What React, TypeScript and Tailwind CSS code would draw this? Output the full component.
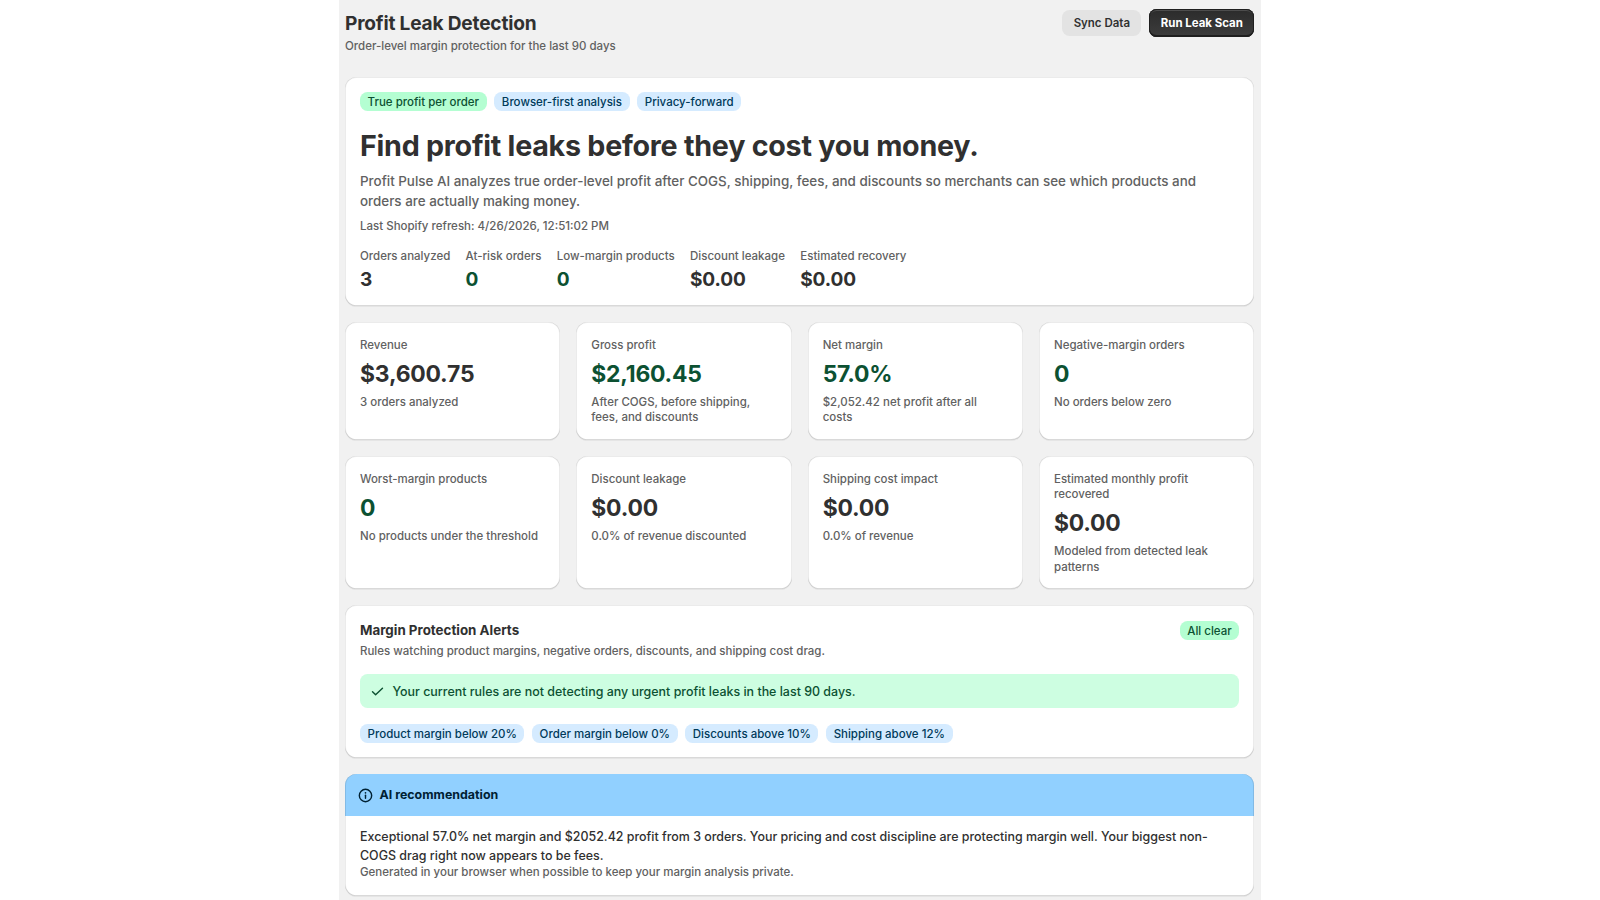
import type { ReactNode } from "react";

type Tone = "success" | "info";

const Badge = ({ tone, children }: { tone: Tone; children: ReactNode }) => (
  <span
    className={`inline-flex h-[19px] shrink-0 items-center rounded-[7.6px] px-[7.6px] pt-px text-[11.5px] leading-[16px] font-[550] whitespace-nowrap ${
      tone === "success" ? "bg-[#b4fed2] text-[#0c5132]" : "bg-[#d5ebff] text-[#003a5a]"
    }`}
  >
    {children}
  </span>
);

const Card = ({ className = "", children }: { className?: string; children: ReactNode }) => (
  <section
    className={`rounded-[11.5px] bg-white shadow-[0_1px_0_rgba(26,26,26,0.05),inset_1px_0_0_rgba(0,0,0,0.08),inset_-1px_0_0_rgba(0,0,0,0.08),inset_0_-1px_0_rgba(0,0,0,0.15),inset_0_1px_0_rgba(204,204,204,0.4)] ${className}`}
  >
    {children}
  </section>
);

const summary = [
  { label: "Orders analyzed", value: "3" },
  { label: "At-risk orders", value: "0", good: true },
  { label: "Low-margin products", value: "0", good: true },
  { label: "Discount leakage", value: "$0.00" },
  { label: "Estimated recovery", value: "$0.00" },
];

const metrics = [
  { label: "Revenue", value: "$3,600.75", note: "3 orders analyzed" },
  { label: "Gross profit", value: "$2,160.45", note: "After COGS, before shipping, fees, and discounts", good: true },
  { label: "Net margin", value: "57.0%", note: "$2,052.42 net profit after all costs", good: true },
  { label: "Negative-margin orders", value: "0", note: "No orders below zero", good: true },
  { label: "Worst-margin products", value: "0", note: "No products under the threshold", good: true },
  { label: "Discount leakage", value: "$0.00", note: "0.0% of revenue discounted" },
  { label: "Shipping cost impact", value: "$0.00", note: "0.0% of revenue" },
  { label: "Estimated monthly profit recovered", value: "$0.00", note: "Modeled from detected leak patterns" },
];

const rules = ["Product margin below 20%", "Order margin below 0%", "Discounts above 10%", "Shipping above 12%"];

const Header = () => (
  <header className="flex h-[77px] items-start justify-between pt-[9px]">
    <div>
      <h1 className="pt-px text-[19.1px] leading-[27px] font-[650] tracking-[-0.18px] text-[#303030]">Profit Leak Detection</h1>
      <p className="mt-px text-[11.5px] leading-[16px] font-[450] text-[#616161]">
        Order-level margin protection for the last 90 days
      </p>
    </div>
    <div className="flex gap-[8px]">
      <button className="mt-px h-[26px] w-[79px] rounded-[7.6px] bg-[#e3e3e3] pt-px text-[11.48px] font-[600] text-[#303030]">
        Sync Data
      </button>
      <button className="h-[28px] w-[105px] rounded-[7.6px] bg-linear-to-b from-[#2b2b2b] to-[#3d3d3d] pt-px text-[11.48px] font-[650] text-white shadow-[inset_0_0_0_1px_#1f1f1f,inset_0_2px_0_#4d4d4d,inset_0_-2px_0_#1f1f1f]">
        Run Leak Scan
      </button>
    </div>
  </header>
);

const Hero = () => (
  <Card className="h-[229px] px-[15px] pt-[15px]">
    <div className="flex gap-[7.6px]">
      <Badge tone="success">True profit per order</Badge>
      <Badge tone="info">Browser-first analysis</Badge>
      <Badge tone="info">Privacy-forward</Badge>
    </div>
    <h2 className="mt-[16px] text-[28.65px] leading-[38px] font-bold tracking-[-0.24px] text-[#303030]">
      Find profit leaks before they cost you money.
    </h2>
    <p className="mt-[7.4px] max-w-[860px] text-[13.41px] leading-[19.3px] font-[450] text-[#616161]">
      Profit Pulse AI analyzes true order-level profit after COGS, shipping, fees, and discounts so merchants can see
      which products and orders are actually making money.
    </p>
    <p className="mt-[7.6px] text-[11.5px] leading-[15.3px] font-[450] text-[#616161]">
      Last Shopify refresh: 4/26/2026, 12:51:02 PM
    </p>
    <div className="mt-[15.2px] flex gap-[15.3px]">
      {summary.map((item) => (
        <div key={item.label}>
          <div className="text-[11.5px] leading-[15.3px] font-[450] text-[#616161]">{item.label}</div>
          <div className={`mt-[4.1px] text-[19.1px] leading-[22.9px] font-[650] tracking-[-0.15px] ${item.good ? "text-[#0c5132]" : "text-[#303030]"}`}>
            {item.value}
          </div>
        </div>
      ))}
    </div>
  </Card>
);

const Metrics = () => (
  <div className="grid grid-cols-4 grid-rows-[118px_133px] gap-x-[16px] gap-y-[16px]">
    {metrics.map((item) => (
      <Card key={item.label} className="px-[15px] pt-[15.5px]">
        <div className="text-[11.48px] leading-[15.3px] font-[450] text-[#616161]">{item.label}</div>
        <div className={`mt-[6.2px] mb-[5px] text-[22.9px] leading-[31px] font-[650] tracking-[-0.2px] ${item.good ? "text-[#0c5132]" : "text-[#303030]"}`}>
          {item.value}
        </div>
        <div className="text-[11.48px] leading-[15.3px] font-[450] text-[#616161]">{item.note}</div>
      </Card>
    ))}
  </div>
);

const Alerts = () => (
  <Card className="h-[153px] px-[15px] pt-[15px]">
    <div className="flex items-start justify-between">
      <div className="pt-px">
        <h3 className="text-[13.37px] leading-[19px] font-[650] text-[#303030]">Margin Protection Alerts</h3>
        <p className="mt-[3.7px] text-[11.5px] leading-[15.3px] font-[450] text-[#616161]">
          Rules watching product margins, negative orders, discounts, and shipping cost drag.
        </p>
      </div>
      <div className="flex pt-[0.5px]">
        <Badge tone="success">All clear</Badge>
      </div>
    </div>
    <div className="mt-[15px] flex h-[34.5px] items-center rounded-[7.6px] bg-[#cdfee1] pl-[8px] text-[#0c5132]">
      <svg className="size-[19px] shrink-0" viewBox="0 0 20 20" fill="none" stroke="currentColor" strokeWidth="1.5" strokeLinecap="round" strokeLinejoin="round">
        <path d="M4.75 10.25 8 13.5l7.25-7" />
      </svg>
      <span className="ml-[5.5px] text-[12.45px] leading-[19.1px] font-[550]">
        Your current rules are not detecting any urgent profit leaks in the last 90 days.
      </span>
    </div>
    <div className="mt-[15.5px] flex gap-[7.6px]">
      {rules.map((rule) => (
        <Badge key={rule} tone="info">{rule}</Badge>
      ))}
    </div>
  </Card>
);

const Recommendation = () => (
  <Card className="h-[122px]">
    <div className="flex h-[42px] items-center rounded-t-[11.5px] bg-[#91d0ff] pl-[11px] text-[#002133] shadow-[inset_1px_0_0_rgba(0,0,0,0.1),inset_-1px_0_0_rgba(0,0,0,0.1)]">
      <svg className="size-[19px]" viewBox="0 0 20 20" fill="none" stroke="currentColor" strokeWidth="1.5" strokeLinecap="round">
        <circle cx="10" cy="10" r="6.5" />
        <path d="M10 9.75v3.25" />
        <circle cx="10" cy="7.2" r="0.9" fill="currentColor" stroke="none" />
      </svg>
      <h3 className="ml-[4.5px] text-[12.41px] leading-[19.1px] font-[650]">AI recommendation</h3>
    </div>
    <div className="px-[15px] pt-[11.3px]">
      <p className="text-[12.44px] leading-[19.1px] font-[450] text-[#303030]">
        Exceptional 57.0% net margin and $2052.42 profit from 3 orders. Your pricing and cost discipline are protecting
        margin well. Your biggest non-COGS drag right now appears to be fees.
      </p>
      <p className="text-[11.5px] leading-[15.3px] font-[450] text-[#616161]">
        Generated in your browser when possible to keep your margin analysis private.
      </p>
    </div>
  </Card>
);

export default function App() {
  return (
    <div className="h-[900px] overflow-hidden bg-white font-['Inter',sans-serif]">
      <main className="ml-[339px] h-full w-[922px] bg-[#f1f1f1] pr-[6.7px] pl-[6px]">
        <Header />
        <div className="flex flex-col gap-[16px]">
          <Hero />
          <Metrics />
          <Alerts />
          <Recommendation />
        </div>
      </main>
    </div>
  );
}
